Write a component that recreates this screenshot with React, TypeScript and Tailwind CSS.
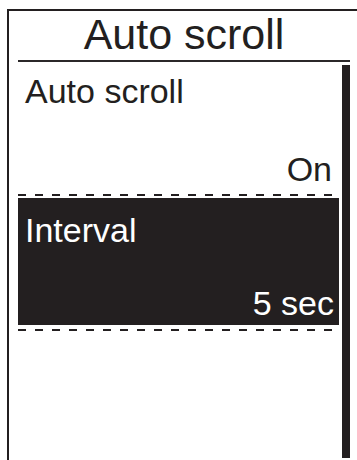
import React from "react";

interface MenuItemProps {
  label: string;
  value: string;
  selected?: boolean;
}

const Dashes: React.FC<{ className?: string }> = ({ className }) => (
  <div
    className={
      "h-[2px] w-full bg-[repeating-linear-gradient(to_right,#231f20_0_8px,transparent_8px_17px)] " +
      (className ?? "")
    }
  ></div>
);

const MenuItem: React.FC<MenuItemProps> = ({ label, value, selected }) => {
  if (selected) {
    return (
      <div className="flex h-[127px] flex-col justify-between bg-[#231f20] pt-[12px] pb-[2px] pr-[5px] pl-[7px] text-white">
        <div className="leading-[40px]">{label}</div>
        <div className="text-right leading-[40px]">{value}</div>
      </div>
    );
  }
  return (
    <div className="flex h-[132px] flex-col justify-between pt-[9px] pb-[5px] pr-[7px] pl-[7px] text-[#231f20]">
      <div className="leading-[40px]">{label}</div>
      <div className="text-right leading-[40px]">{value}</div>
    </div>
  );
};

export default function App() {
  return (
    <div
      className="flex h-[460px] w-[357px] flex-col overflow-hidden bg-white"
      style={{ fontFamily: '"Liberation Sans", Arial, sans-serif' }}
    >
      <div className="ml-[7px] mt-[9px] flex flex-1 flex-col border-l-2 border-t-2 border-[#231f20]">
        <div className="pl-[9px] pr-[7px]">
          <div className="text-center text-[43px] leading-[46px] text-[#231f20]">
            Auto scroll
          </div>
          <div className="mt-[3px] h-[2px] bg-[#2b2829]"></div>
        </div>
        <div className="flex flex-1 pl-[9px] pr-[7px] pb-[2px]">
          <div className="flex flex-1 flex-col text-[34px]">
            <MenuItem label="Auto scroll" value="On" />
            <Dashes />
            <div className="h-[2px]"></div>
            <MenuItem label="Interval" value="5 sec" selected />
            <Dashes className="mt-[4px]" />
          </div>
          <div className="ml-[3px] mt-[3px] w-[8px] bg-[#231f20]"></div>
        </div>
      </div>
    </div>
  );
}
